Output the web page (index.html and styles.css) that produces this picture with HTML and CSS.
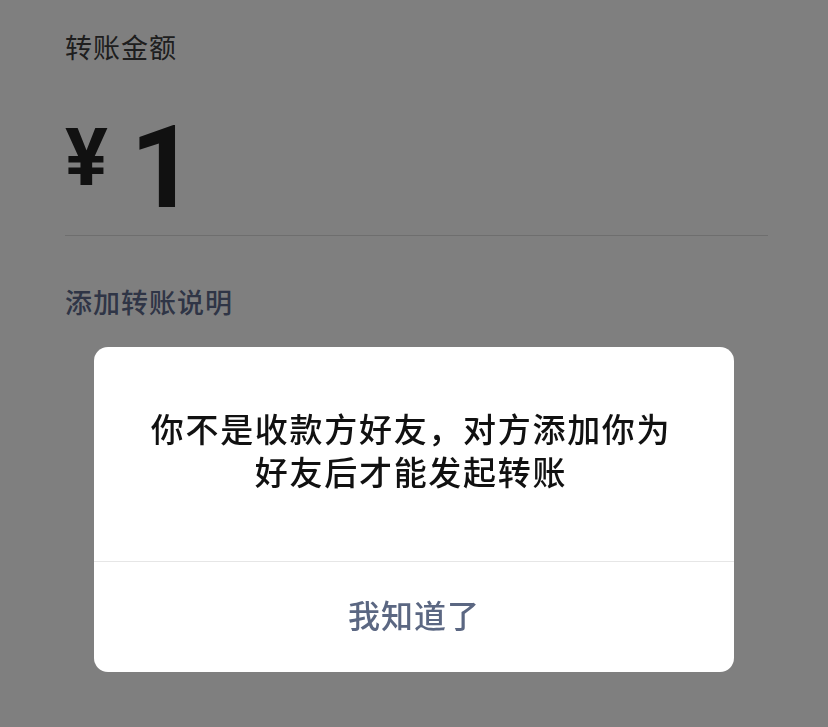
FILE: index.html
```html
<!DOCTYPE html>
<html lang="zh-CN">
<head>
<meta charset="utf-8">
<title>转账</title>
<link rel="stylesheet" href="styles.css">
</head>
<body>
<main class="page">
  <div class="label">转账金额</div>
  <div class="amount">
    <span class="currency">¥</span>
    <span class="value">1</span>
  </div>
  <div class="divider"></div>
  <div class="note-link">添加转账说明</div>
</main>
<div class="mask">
  <div class="dialog">
    <div class="dialog-body">
      <p class="dialog-text">你不是收款方好友，对方添加你为<br>好友后才能发起转账</p>
    </div>
    <div class="dialog-footer">
      <span class="dialog-btn">我知道了</span>
    </div>
  </div>
</div>
</body>
</html>
```
FILE: styles.css
```css
html, body {
  margin: 0;
  padding: 0;
  background: #ffffff;
  height: 100%;
}
body {
  font-family: "Noto Sans CJK SC", "Noto Sans", sans-serif;
  overflow: hidden;
}
.page {
  padding: 30px 60px 0 65px;
}
.label {
  font-size: 27px;
  line-height: 34px;
  letter-spacing: 1px;
  color: #3c3c3c;
}
.amount {
  margin-top: 46px;
  display: flex;
  align-items: flex-start;
  gap: 22px;
  font-family: Roboto, "Liberation Sans", sans-serif;
  font-weight: 700;
  color: #222222;
}
.currency {
  font-size: 80px;
  line-height: 1;
  margin-top: 8px;
}
.value {
  font-size: 115px;
  line-height: 1;
  font-weight: 700;
}
.divider {
  margin-top: 10px;
  height: 1px;
  background: #dcdcdc;
}
.note-link {
  margin-top: 49px;
  font-size: 27px;
  line-height: 34px;
  letter-spacing: 1px;
  font-weight: 500;
  color: #5e6a8c;
}
.mask {
  position: fixed;
  inset: 0;
  background: rgba(0, 0, 0, 0.5);
  display: flex;
  justify-content: center;
  align-items: flex-start;
  padding-top: 347px;
}
.dialog {
  width: 640px;
  background: #ffffff;
  border-radius: 14px;
  overflow: hidden;
}
.dialog-body {
  height: 214px;
  display: flex;
  align-items: center;
  justify-content: center;
  border-bottom: 1px solid #e6e6e6;
}
.dialog-text {
  margin: 0 6px 8px 0;
  font-size: 33px;
  line-height: 43px;
  letter-spacing: 1.7px;
  font-weight: 500;
  color: #111111;
  text-align: center;
}
.dialog-footer {
  height: 110px;
  display: flex;
  align-items: center;
  justify-content: center;
  padding-bottom: 6px;
  box-sizing: border-box;
}
.dialog-btn {
  font-size: 32px;
  letter-spacing: 1px;
  font-weight: 500;
  color: #5b6782;
}
```
